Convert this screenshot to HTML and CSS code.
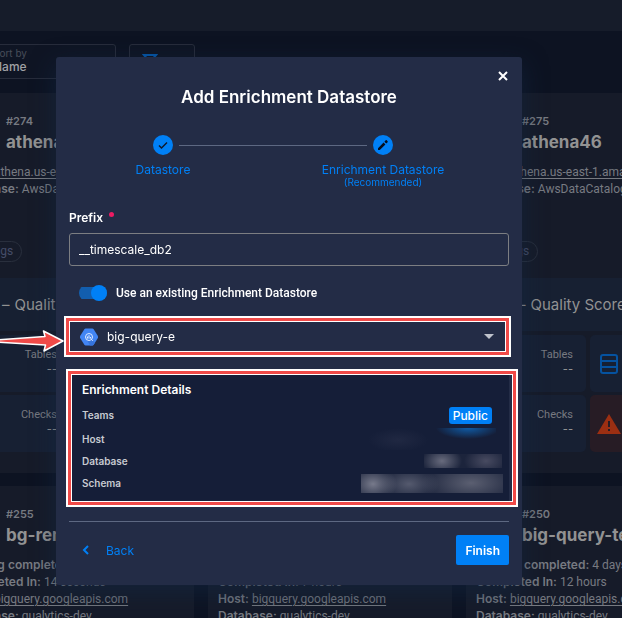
FILE: index.html
```html
<!DOCTYPE html>
<html lang="en">
<head>
<meta charset="utf-8">
<meta name="viewport" content="width=device-width, initial-scale=1">
<title>Add Enrichment Datastore</title>
<link rel="stylesheet" href="styles.css">
</head>
<body>
<div class="page">
  <header class="topbar"></header>
  <div class="toolbar">
    <button class="sort" type="button"><span class="sort-label">Sort by</span><span class="sort-value">Name</span></button>
    <button class="filter" type="button" aria-label="Filter">
      <svg width="16" height="16" viewBox="0 0 16 16" fill="none" stroke="#0556a8" stroke-width="2"><path d="M2 2h12l-5 6v5l-2-1V8z"/></svg>
    </button>
  </div>
  <main class="cards">
    <article class="card">
      <div class="card-head"><span class="card-id">#274</span><h2 class="card-name">athena</h2></div>
      <div class="facts">
        <p><b>Host:</b> <a href="#">athena.us-east-1.amazonaws.com</a></p>
        <p><b>Database:</b> AwsDataCatalog</p>
      </div>
      <div class="tags"><span class="tag">No Tags</span></div>
      <div class="quality"><span>–</span><span>Quality Score</span></div>
      <div class="tiles">
        <div class="tile"><span>Tables</span><b>--</b></div><div class="tile"></div>
        <div class="tile"><span>Checks</span><b>--</b></div><div class="tile alert"></div>
      </div>
    </article>
    <article class="card"></article>
    <article class="card">
      <div class="card-head"><span class="card-id">#275</span><h2 class="card-name">athena46</h2></div>
      <div class="facts">
        <p><b>Host:</b> <a href="#">athena.us-east-1.amazonaws.com</a></p>
        <p><b>Database:</b> AwsDataCatalog</p>
      </div>
      <div class="tags"><span class="tag">No Tags</span></div>
      <div class="quality"><span>–</span><span>Quality Score</span></div>
      <div class="tiles">
        <div class="tile"><span>Tables</span><b>--</b></div>
        <div class="tile icon-tile"><svg width="18" height="20" viewBox="0 0 18 20" fill="none" stroke="#0552a0" stroke-width="2"><rect x="1" y="1" width="16" height="18" rx="2"/><path d="M1 7h16M1 13h16"/></svg></div>
        <div class="tile"><span>Checks</span><b>--</b></div>
        <div class="tile icon-tile alert"><svg width="24" height="20" viewBox="0 0 24 20"><path d="M12 0l12 20H0z" fill="#9c2f12"/><path d="M11 7h2v6h-2zM11 15h2v2h-2z" fill="#271c25"/></svg></div>
      </div>
    </article>
    <article class="card">
      <div class="card-head"><span class="card-id">#255</span><h2 class="card-name">bg-remote</h2></div>
      <div class="facts">
        <p><b>Catalog completed:</b> 4 days ago</p>
        <p><b>Completed In:</b> 14 seconds</p>
        <p><b>Host:</b> <a href="#">bigquery.googleapis.com</a></p>
        <p><b>Database:</b> qualytics-dev</p>
      </div>
    </article>
    <article class="card">
      <div class="card-head"><span class="card-id"></span><h2 class="card-name"></h2></div>
      <div class="facts">
        <p><b>Catalog completed:</b> 4 days ago</p>
        <p><b>Completed In:</b> 7 hours</p>
        <p><b>Host:</b> <a href="#">bigquery.googleapis.com</a></p>
        <p><b>Database:</b> qualytics-dev</p>
      </div>
    </article>
    <article class="card">
      <div class="card-head"><span class="card-id">#250</span><h2 class="card-name">big-query-test</h2></div>
      <div class="facts">
        <p><b>Catalog completed:</b> 4 days ago</p>
        <p><b>Completed In:</b> 12 hours</p>
        <p><b>Host:</b> <a href="#">bigquery.googleapis.com</a></p>
        <p><b>Database:</b> qualytics-dev</p>
      </div>
    </article>
  </main>
</div>

<div class="overlay">
  <form class="modal" role="dialog" aria-labelledby="title">
    <button class="close" type="button" aria-label="Close"><svg width="10" height="10" viewBox="0 0 10 10" stroke="#fff" stroke-width="2"><path d="M1 1l8 8M9 1L1 9"/></svg></button>
    <h1 id="title" class="title">Add Enrichment Datastore</h1>
    <ol class="stepper">
      <li class="step">
        <svg width="20" height="20" viewBox="0 0 20 20"><circle cx="10" cy="10" r="10" fill="#0080f6"/><path d="M6 10.500l2.500 2.500L14 7.500" fill="none" stroke="#10192c" stroke-width="1.500"/></svg>
        <span class="step-name">Datastore</span>
      </li>
      <li class="step">
        <svg width="20" height="20" viewBox="0 0 20 20"><circle cx="10" cy="10" r="10" fill="#0080f6"/><path d="M5 13.200V15h1.800l5.600-5.600-1.800-1.800zM14.600 7.200c.3-.3.3-.7 0-1l-.9-.9c-.3-.3-.7-.3-1 0l-1.300 1.400 1.800 1.800z" fill="#060d1b"/></svg>
        <span class="step-name">Enrichment Datastore</span>
        <span class="step-note">(Recommended)</span>
      </li>
    </ol>
    <label class="label" for="prefix">Prefix<span class="required"></span></label>
    <input class="field" id="prefix" type="text" value="__timescale_db2">
    <label class="switch"><input type="checkbox" role="switch" checked><span>Use an existing Enrichment Datastore</span></label>
    <div class="picker">
      <svg class="picker-icon" width="18" height="18" viewBox="0 0 18 18"><path d="M5.500.5h7l1 .6L18 8.300v1.400l-4.500 7.200-1 .6h-7l-1-.6L0 9.700V8.300l4.500-7.200z" fill="#4285f4"/><path d="M11 11l4 3.600-1.500 2.300-1 .6H10L7 12z" fill="#3674dc"/><circle cx="9" cy="9" r="3.500" fill="none" stroke="#dfeaff"/><path d="M7.500 8.500v2M9 7.200v3.500M10.500 9v1.500M11.200 11.200l1.600 1.600" stroke="#dfeaff"/></svg>
      <select class="select" aria-label="Enrichment datastore"><option>big-query-e</option></select>
      <svg class="caret" width="10" height="5" viewBox="0 0 10 5"><path d="M0 0h10L5 5z" fill="#bfc3cc"/></svg>
      <span class="callout"></span>
      <svg class="arrow" width="66" height="22" viewBox="0 0 66 22"><path d="M-3 10L46 6.500 44.500 1 64 11 45 21l1.500-6L-3 12z" fill="#f04a48" stroke="#fff" stroke-width="1.500" stroke-linejoin="round"/></svg>
    </div>
    <section class="details">
      <h2 class="details-title">Enrichment Details</h2>
      <dl class="rows">
        <div><dt>Teams</dt><dd><span class="badge">Public</span></dd></div>
        <div><dt>Host</dt><dd class="smudge smudge-host"></dd></div>
        <div><dt>Database</dt><dd class="smudge smudge-database"></dd></div>
        <div><dt>Schema</dt><dd class="smudge smudge-schema"></dd></div>
      </dl>
      <span class="callout"></span>
    </section>
    <footer class="actions">
      <button class="back" type="button"><svg width="7" height="10" viewBox="0 0 7 10" fill="none" stroke="#0080f6" stroke-width="2"><path d="M6 1L2 5l4 4"/></svg>Back</button>
      <button class="finish" type="submit">Finish</button>
    </footer>
  </form>
</div>
</body>
</html>
```
FILE: styles.css
```css
* { box-sizing: border-box; }
body {
  margin: 0;
  background: #0d1322;
  color: #777a81;
  font: 12px/17px Inter, "Liberation Sans", sans-serif;
}
h1, h2, p, dl, dd, ol { margin: 0; padding: 0; }
button, input, select { font: inherit; color: inherit; margin: 0; }
button { cursor: pointer; }

.page { height: 100vh; overflow: hidden; }
.topbar { height: 31px; background: #161c2a; }
.toolbar { display: flex; gap: 13px; margin: 13px 0 14px -14px; }
.sort, .filter {
  height: 35px;
  background: #0f1524;
  border: 1px solid #272c3b;
  border-radius: 3px;
}
.sort { width: 130px; padding: 0 6px; text-align: left; }
.sort span { display: block; }
.sort-label { font-size: 10px; line-height: 11px; color: #484d59; }
.sort-value { line-height: 16px; color: #a0a1a5; font-weight: 500; }
.filter { display: flex; align-items: flex-start; width: 66px; padding: 8px 12px 0; }

.cards {
  display: grid;
  grid-template-columns: repeat(3, 244px);
  grid-template-rows: 380px auto;
  gap: 13px 14px;
  margin-left: -50px;
}
.card { background: #161b29; overflow: hidden; }
.card-head { height: 70px; padding: 19px 0 0 56px; white-space: nowrap; }
.card-id { display: block; height: 18px; font-size: 11px; font-weight: 600; line-height: 18px; }
.card-name { font-size: 17px; line-height: 24px; font-weight: 700; color: #929292; }
.facts { padding: 0 10px; white-space: nowrap; font-family: Roboto, sans-serif; }
.facts p { height: 17px; }
.facts a { color: inherit; text-underline-offset: 2px; }
.facts b { font-family: Inter, sans-serif; font-weight: 600; }
.tags { padding: 44px 10px 16px; display: flex; }
.tag { height: 21px; padding: 0 8px; border: 1px solid #292f3d; border-radius: 11px; font-family: Roboto, sans-serif; line-height: 19px; color: #454d68; }
.quality { display: flex; gap: 5px; height: 53px; padding: 0 52px; font-size: 15px; line-height: 53px; background: #172032; white-space: nowrap; color: #929292; }
.tiles { display: grid; grid-template-columns: 1fr 1fr; gap: 3px 4px; padding: 4px; }
.tile { height: 57px; padding: 11px 13px; border-radius: 5px; background: #172033; text-align: right; font-family: Roboto, sans-serif; font-size: 11px; line-height: 17px; }
.tile span, .tile b { display: block; }
.tile b { font-family: Inter, sans-serif; line-height: 13px; font-weight: 500; color: #929292; }
.icon-tile { display: flex; align-items: center; justify-content: flex-start; padding: 0 10px; }
.icon-tile.alert { padding: 0 7px; }
.alert { background: #271c25; }

.overlay { position: fixed; inset: 0; padding: 57px 100px 0 56px; }
.modal {
  position: relative;
  padding: 28px 13px 20px;
  background: #232c46;
  border-radius: 3px;
  box-shadow: 0 8px 24px #13284599;
  color: #fff;
}
.close { position: absolute; top: 9px; right: 9px; padding: 5px; border: 0; background: none; line-height: 0; }
.title { font-size: 17px; line-height: 24px; font-weight: 600; text-align: center; }

.stepper { display: flex; height: 74px; margin: 26px 16px 0 -16px; list-style: none; color: #0080f6; }
.step { position: relative; flex: 1; display: flex; flex-direction: column; align-items: center; }
.step:first-child::after {
  content: "";
  position: absolute;
  top: 10px;
  left: calc(50% + 16px);
  width: calc(100% - 32px);
  height: 1px;
  background: #5d6882;
}
.step-name { margin-top: 6px; }
.step-note { font-size: 10px; line-height: 8px; }

.label { display: flex; gap: 6px; height: 24px; font-weight: 600; }
.required { width: 5px; height: 5px; margin-top: 3px; border-radius: 50%; background: #ec1b63; }
.field { display: block; width: 100%; height: 33px; padding: 0 9px; border: 1px solid #7c7e82; border-radius: 3px; background: none; }
.switch { display: flex; align-items: center; gap: 9px; height: 54px; padding-left: 10px; font-family: Roboto, sans-serif; font-weight: 500; }
.switch input {
  appearance: none;
  display: flex;
  justify-content: flex-end;
  align-items: center;
  width: 28px;
  height: 16px;
  background: linear-gradient(#125eae, #125eae) center / 100% 12px no-repeat;
  border-radius: 8px;
}
.switch input::before { content: ""; width: 16px; height: 16px; border-radius: 50%; background: #0080f6; }

.picker { position: relative; display: flex; align-items: center; height: 33px; }
.select { appearance: none; width: 100%; height: 33px; padding: 0 38px; border: 0; background: none; font-size: 12px; }
.picker-icon { position: absolute; left: 11px; }
.caret { position: absolute; right: 15px; }
.callout {
  position: absolute;
  inset: -4px -2px -4px -5px;
  border: 2px solid #fff;
  box-shadow: inset 0 0 0 3px #f04a48, inset 0 0 0 4px #fff;
  pointer-events: none;
}
.arrow { position: absolute; right: 100%; top: 10px; margin-right: 4px; }

.details { position: relative; height: 128px; margin: 21px 0 19px; padding: 7px 13px; background: #151e38; }
.details .callout { inset: -5px -9px -5px -3px; }
.details-title { font-size: 12px; line-height: 17px; font-weight: 600; }
.rows { padding-top: 4px; font-size: 10px; font-weight: 600; color: #c7cad1; }
.rows > div { display: flex; justify-content: space-between; align-items: center; height: 22px; }
.rows > div:first-child { height: 26px; }
.badge { display: block; margin-right: 4px; padding: 0 4px; border-radius: 3px; background: #0080f6; color: #fff; font-size: 12px; font-weight: 500; line-height: 17px; }
.smudge { height: 14px; }
.smudge-host { align-self: flex-start; width: 128px; height: 22px; background: radial-gradient(32px 11px at 100px 0, #0f5ba5, transparent), radial-gradient(30px 12px at 30px 12px, #202842, transparent); }
.smudge-database { width: 78px; margin-right: -6px; background: radial-gradient(20px 14px at 18px 7px, #686b7d, transparent), radial-gradient(22px 14px at 62px 7px, #484b61, transparent), #1c243c; }
.smudge-schema { width: 142px; height: 19px; margin-right: -7px; background: radial-gradient(24px 18px at 12px 10px, #777a8b, transparent), radial-gradient(30px 17px at 48px 10px, #555a6e, transparent), radial-gradient(50px 22px at 110px 9px, #5b5f71, transparent), #1d253d; }

.actions { display: flex; justify-content: space-between; align-items: center; padding-top: 13px; border-top: 1px solid #5d6882; }
.back { display: flex; align-items: center; gap: 17px; padding: 0 13px; border: 0; background: none; color: #0080f6; }
.finish { height: 30px; padding: 0 9px; border: 0; border-radius: 2px; background: #0080f6; font-weight: 600; }
```
